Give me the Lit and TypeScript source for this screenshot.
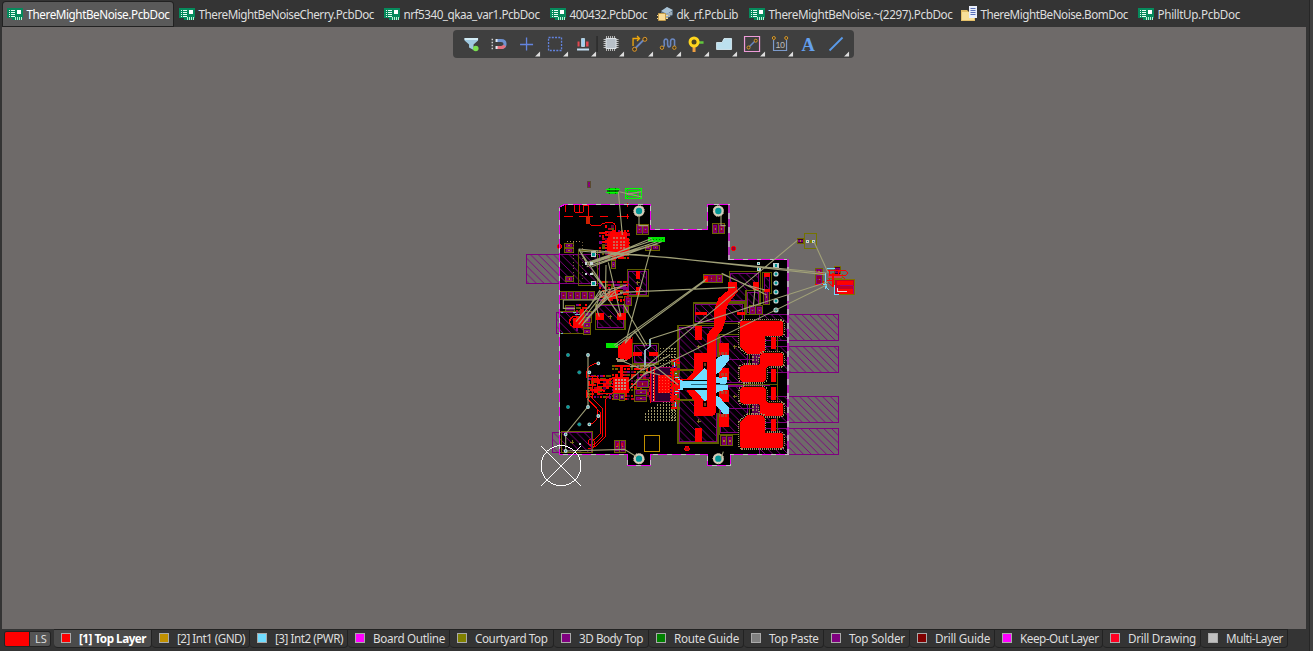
import { LitElement, html, css, svg } from "lit";
import { customElement } from "lit/decorators.js";

type Box = [number, number, number, number];
const RED = "#ff0000", PUR = "#800080", OLV = "#808000", CYN = "#70dcff", RAT = "#a0a078";

/* [kind, label, tab width, text width] */
const DOCS: [string, string, number, number][] = [
  ["pcb", "ThereMightBeNoise.PcbDoc", 172, 143],
  ["pcb", "ThereMightBeNoiseCherry.PcbDoc", 205, 175.5],
  ["pcb", "nrf5340_qkaa_var1.PcbDoc", 166, 136],
  ["pcb", "400432.PcbDoc", 107, 77.5],
  ["lib", "dk_rf.PcbLib", 92, 61.5],
  ["pcb", "ThereMightBeNoise.~(2297).PcbDoc", 212, 184],
  ["bom", "ThereMightBeNoise.BomDoc", 177, 147.5],
  ["pcb", "PhilltUp.PcbDoc", 111, 82.5],
];

/* [colour, label, tab width, text width] */
const LAYERS: [string, string, number, number][] = [
  ["#ff0000", "[1] Top Layer", 98, 67],
  ["#c09000", "[2] Int1 (GND)", 98, 68],
  ["#70dcff", "[3] Int2 (PWR)", 98, 68],
  ["#ff00ff", "Board Outline", 102, 72],
  ["#808000", "Courtyard Top", 104, 72.5],
  ["#800080", "3D Body Top", 95, 64],
  ["#008000", "Route Guide", 95, 65],
  ["#808080", "Top Paste", 80, 49.5],
  ["#800080", "Top Solder", 86, 56],
  ["#800000", "Drill Guide", 85, 55],
  ["#ff00ff", "Keep-Out Layer", 108, 78.5],
  ["#ff0022", "Drill Drawing", 98, 68],
  ["#c0c0c0", "Multi-Layer", 87, 57],
];

const docIcon = (kind: string) => {
  if (kind === "lib")
    return svg`<path d="M4 6L10 1L16 5V9L9 13L4 10Z" fill="#5b6f80"/><path d="M4 5L10 1L16 4L10 8Z" fill="#a9c3d6"/><path d="M10 8V12M12 7V11M14 6V9" stroke="#e3edf3"/><path d="M1.500 7.500H8.500V14.500H1.500Z" fill="#f9dc95" stroke="#c29a48"/><path d="M0 9.500H1M0 12.500H1M9 9.500H11M9 12.500H11" stroke="#f5d98b"/>`;
  if (kind === "bom")
    return svg`<path d="M0 4H6L8 6H14V15H0Z" fill="#e5c069"/><path d="M1 6H13V14H1Z" fill="#f9e09a"/><path d="M8 0H16V12H8Z" fill="#e8eefc"/><path d="M9.500 2.500H14.500M9.500 4.500H14.500M9.500 6.500H14.500M9.500 8.500H14.500" stroke="#5870b8"/>`;
  return svg`<path d="M0 2H16V12H14V14H5V12H0Z" fill="#068a5c"/><path d="M2 4.500H3M2 6.500H3M2 8.500H3M2 10.500H3M4 4.500H8M4 6.500H8M4 8.500H8M4 10.500H8" stroke="#e8fff4" stroke-width="1"/><path d="M10 4H14V8H10Z" fill="#fff"/><path d="M8.500 11V14M10.500 11V14M12.500 11V14M14.500 11V14" stroke="#bdf0d5"/>`;
};

const TOOLS = [
  svg`<path d="M7.500 8H21V10.500L16.500 14.500V20L12 17.500V14.500L7.500 10.500Z" fill="#9fc9e0"/><path d="M7.500 8H21V10H7.500Z" fill="#d3ecf5"/><circle cx="18.700" cy="18.500" r="2.800" fill="#7be052"/>`,
  svg`<path d="M12 10.500H16Q20 10.500 20 14Q20 17.500 16 17.500H12" fill="none" stroke="#6f92d0" stroke-width="3"/><path d="M12 17.500H16Q18.500 17.500 19.500 15.500" fill="none" stroke="#e8707c" stroke-width="3"/><path d="M10.500 10.500H12.500M10.500 17.500H12.500" stroke="#dfe8ee" stroke-width="3"/><path d="M6.500 9.500H8M6.500 12.500H8M6.500 15.500H8M6.500 18.500H8" stroke="#ccc" stroke-width="1.500"/>`,
  svg`<path d="M7 14.500H20M13.500 7.500V20.500" stroke="#6384df" stroke-width="1.300"/>`,
  svg`<path d="M7.500 7.500H20.500V20.500H7.500Z" fill="none" stroke="#6384df" stroke-width="1.300" stroke-dasharray="2 1.250"/>`,
  svg`<path d="M8.500 11.500H10.500V16.500H8.500Z M17 11.500H19.500V16.500H17Z" fill="#e2474f"/><path d="M12.500 8.500H15.500V16.500H12.500Z" fill="#9fd0f2" stroke="#d3ecfa" stroke-width=".7"/><path d="M8 19.500H20" stroke="#c3dff2" stroke-width="2"/>`,
  svg`<path d="M6.500 9.500H21.500M6.500 11.500H21.500M6.500 13.500H21.500M6.500 15.500H21.500M6.500 17.500H21.500M9.500 6V21M11.500 6V21M13.500 6V21M15.500 6V21M17.500 6V21" stroke="#ddd" stroke-width=".8"/><path d="M9 8.500H19V18.500H9Z" fill="#b8c0c8" stroke="#dce2e6"/>`,
  svg`<path d="M9 18.500L17.500 10" stroke="#6a87c0" stroke-width="1.800"/><path d="M7 16V8.500H12.500M11 6L13.500 8.500L11 11" fill="none" stroke="#f0a80c" stroke-width="1.300"/><circle cx="18.800" cy="9.300" r="2" fill="#443820" stroke="#e0982b"/><circle cx="8.500" cy="19.300" r="2" fill="#443820" stroke="#e0982b"/>`,
  svg`<path d="M9 17Q11 16 10 12Q10 9 12 9Q14 9 13.500 13Q13.500 17 15 17Q17 17 16.500 12Q16.500 9 18.500 9Q21 9 20.500 12V16" fill="none" stroke="#6a87c0" stroke-width="1.600"/><circle cx="7.900" cy="17.700" r="1.700" fill="#443820" stroke="#d8992b"/><circle cx="20.300" cy="17.700" r="1.700" fill="#443820" stroke="#d8992b"/>`,
  svg`<path d="M17 12.500H21.500" stroke="#62c83c" stroke-width="2.500"/><path d="M10.500 16H13.500V22H10.500Z" fill="#f0a040"/><circle cx="12" cy="12" r="4" fill="#4a4322" stroke="#ffd51d" stroke-width="3"/>`,
  svg`<path d="M6.500 19.500V12.500H12L14 8.500H21.500V19.500Z" fill="#bce0ee" stroke="#dff4fb" stroke-width=".8"/>`,
  svg`<path d="M6.500 6.500H21.500V21.500H6.500Z" fill="none" stroke="#ee9bd8" stroke-width="1.200"/><path d="M10 18L18 10" stroke="#6a87c0" stroke-width="1.500"/><circle cx="17.700" cy="10.700" r="1.500" fill="#443820" stroke="#d8992b"/><circle cx="10.500" cy="17.500" r="1.500" fill="#443820" stroke="#d8992b"/>`,
  svg`<path d="M7.500 10V20.500H20.500V10" fill="none" stroke="#7c9bcc" stroke-width="1.200"/><circle cx="7.800" cy="8" r="1.500" fill="#443820" stroke="#d8992b"/><circle cx="20.200" cy="8" r="1.500" fill="#443820" stroke="#d8992b"/><text x="9.500" y="17.500" class="ten">10</text>`,
  svg`<text x="7.500" y="21" class="bigA">A</text>`,
  svg`<path d="M7.500 20.500L20.500 7.500" stroke="#5a9bea" stroke-width="1.800"/>`,
];

/* Board primitives. One drawing unit is a third of a pixel. */
const fill = (c: string, list: Box[]) => list.map(([x, y, w, h]) => svg`<rect x=${x} y=${y} width=${w} height=${h} fill=${c}/>`);
const frame = (c: string, list: Box[]) => list.map(([x, y, w, h]) => svg`<rect x=${x} y=${y} width=${w} height=${h} fill="none" stroke=${c} stroke-width="3"/>`);
const body = (list: Box[]) => list.map(([x, y, w, h]) => svg`<rect x=${x} y=${y} width=${w} height=${h} fill="url(#hatch)" stroke=${PUR} stroke-width="3"/>`);
const court = (list: Box[]) => list.map(([x, y, w, h]) => svg`<rect x=${x} y=${y} width=${w} height=${h} fill="#000" stroke="#5c5c00" stroke-width="4"/><rect x=${x + 5} y=${y + 5} width=${w - 10} height=${h - 10} fill="url(#hatch)" stroke=${PUR} stroke-width="3"/>`);
const part = (list: Box[]) => list.map(([x, y, w, h]) => {
  const wide = w > h;
  const a = wide ? [w / 2 - 5, h - 8] : [w - 8, h / 2 - 5];
  return svg`<rect x=${x} y=${y} width=${w} height=${h} fill="#3c0030" stroke="#6c6400" stroke-width="3"/>
  <rect x=${x + 4} y=${y + 4} width=${a[0]} height=${a[1]} fill="#900030" stroke=${PUR} stroke-width="3"/>
  <rect x=${wide ? x + w / 2 + 1 : x + 4} y=${wide ? y + 4 : y + h / 2 + 1} width=${a[0]} height=${a[1]} fill="#900030" stroke=${PUR} stroke-width="3"/>
  <rect x=${x + w / 2 - 2} y=${y + h / 2 - 2} width="4" height="4" fill="#a08020"/>`;
});
const hole = (x: number, y: number) => svg`<circle cx=${x} cy=${y} r="13" fill="#009696" stroke="#d2cbb9" stroke-width="7" shape-rendering="auto"/><circle cx=${x} cy=${y} r="16" fill="none" stroke="#a89878" stroke-width="2" stroke-dasharray="3 4"/>`;
const pin = (x: number, y: number, r = 5) => svg`<circle cx=${x} cy=${y} r=${r} fill="#009696" stroke="#c8d8d8" stroke-width="3.500" shape-rendering="auto"/>`;
const lines = (c: string, w: number, d: string) => svg`<path d=${d} fill="none" stroke=${c} stroke-width=${w}/>`;

const cluster = (x0: number, y0: number, w: number, h: number, seed: number) => {
  const out = [];
  const cols = [RED, "#c00020", PUR, "#605800", "#e01000", "#600040", RED, "#706000"];
  let s = seed;
  for (let y = 0; y < h; y += 9)
    for (let x = 0; x < w; x += 9) {
      s = (s * 1103515245 + 12345) % 2147483648;
      const k = Math.floor(s / 65536);
      if (k % 7 === 0) continue;
      out.push(svg`<rect x=${x0 + x} y=${y0 + y} width=${k % 3 ? 9 : 6} height=${k % 5 ? 6 : 9} fill=${cols[k % 8]}/>`);
    }
  return out;
};
const dots = (x0: number, y0: number, nx: number, ny: number, step: number, c: string, size = 3, keep: (i: number, j: number) => boolean = () => true) => {
  const out = [];
  for (let j = 0; j < ny; j++) for (let i = 0; i < nx; i++)
    if (keep(i, j)) out.push(svg`<rect x=${x0 + i * step} y=${y0 + j * step} width=${size} height=${size} fill=${c}/>`);
  return out;
};

const OUTLINE = "M118 97L133 88H391V163H562V88H627V253H804V838H631V871H562V838H391V871H323V838H118Z";
const POUR1 = "M217 93H330Q340 93 340 103V129Q340 137 331 137H293Q284 137 284 146V180Q284 191 274 191H232L210 170V101Q210 93 217 93Z";
const POUR2 = "M285 189H330Q340 189 340 199V219Q340 228 331 228H299Q289 228 289 238V261Q289 276 274 276H222Q210 276 210 264V238Q210 226 222 226H261Q270 226 270 217V203Q270 189 285 189Z";

const pour = (d: string, flip: boolean) => svg`<g transform=${flip ? "translate(0 567) scale(1 -1)" : "translate(0 0)"}>
  <path d=${d} fill="#000" stroke="#a09060" stroke-width="11" stroke-dasharray="3 3"/><path d=${d} fill=${RED} stroke="#201800" stroke-width="3"/><path d=${d} fill=${RED}/></g>`;

const upperLeft = () => svg`
  ${fill("#800080", [[202, 19, 12, 19]])}${frame("#5a4a30", [[203, 20, 9, 17]])}${fill("#c00040", [[206, 26, 4, 5]])}
  ${fill("#00d800", [[264, 39, 34, 17]])}${lines("#004000", 2, "M260 46H298M260 51H296M270 39V56M286 39V56")}${lines("#00ff00", 3, "M258 44H300M258 53H294")}
  ${frame("#00ff00", [[318, 41, 46, 29]])}${lines("#00e000", 3, "M318 47H364M318 64H364M324 41V70M358 41V70M330 50H352M330 60H352")}
  ${lines(RED, 3, "M137 112V90M137 90H164V112H178V90M190 90V112M190 112H178M190 91H206M206 90V134M240 90H265M290 90H327M133 125H160M178 125H218M240 125H263M290 125H327")}
  ${lines(RED, 3, "M206 134Q206 151 218 151H240Q250 143 260 143H272Q288 143 288 160V172M322 84V95M322 118V131")}
  ${fill("#d02000", [[199, 124, 10, 22]])}
  ${hole(357, 108)}
  ${part([[350, 148, 18, 30], [368, 148, 18, 30]])}
  ${cluster(237, 172, 36, 72, 7)}${cluster(256, 150, 24, 100, 14)}${cluster(275, 165, 50, 90, 21)}
  ${fill(RED, [[270, 170, 52, 74], [262, 188, 66, 42], [280, 164, 9, 90], [300, 168, 9, 84]])}
  ${dots(279, 187, 4, 4, 10, "#d06050", 6)}
  ${part([[275, 258, 13, 22]])}
  <rect x="19" y="238" width="220" height="87" fill="url(#hatch)" stroke=${PUR} stroke-width="3"/>
  ${frame("#606000", [[176, 227, 58, 106]])}
  ${part([[135, 206, 25, 13], [135, 220, 25, 13], [137, 305, 23, 15]])}
  ${dots(160, 200, 1, 12, 10, "#806840")}${dots(186, 200, 1, 12, 10, "#706040")}${dots(142, 197, 5, 1, 9, "#b09060")}
  <circle cx="119" cy="214" r="7" fill="#900020" stroke=${RED} stroke-width="3"/>
  ${fill("#00e800", [[385, 187, 50, 15]])}${dots(390, 192, 5, 1, 9, "#007000", 4)}${part([[376, 211, 20, 15], [396, 211, 22, 15]])}
  ${fill("#c5d5d5", [[213, 229, 16, 16], [213, 318, 16, 16]])}${fill("#009696", [[217, 233, 9, 9], [217, 322, 9, 9]])}
  ${part([[120, 349, 21, 26], [141, 349, 21, 26], [162, 349, 21, 26], [183, 349, 21, 26], [204, 349, 21, 26], [315, 366, 20, 26], [310, 395, 17, 18], [137, 393, 28, 16]])}
  ${court([[322, 284, 63, 79], [227, 388, 88, 75]])}
  ${fill(RED, [[347, 287, 12, 25], [347, 335, 12, 25], [227, 414, 24, 22], [290, 414, 27, 22]])}
  ${lines("#807020", 3, "M348 323H360M354 317V329M265 425H277M271 419V431")}
  ${cluster(238, 319, 84, 58, 31)}${fill(RED, [[264, 348, 30, 24]])}
  <rect x="109" y="412" width="88" height="63" fill="url(#hatch)" stroke=${PUR} stroke-width="3"/>${frame("#686000", [[120, 411, 78, 66]])}
  ${cluster(168, 388, 30, 80, 41)}${fill(RED, [[160, 430, 38, 30], [180, 402, 13, 30]])}
  <circle cx="165" cy="440" r="16" fill="none" stroke=${RED} stroke-width="4"/>
  ${part([[193, 411, 21, 16], [193, 427, 21, 16], [190, 443, 23, 16], [190, 462, 23, 16]])}
  ${lines("#70b8c0", 3, "M122 414H130M158 414H168M122 475H130M165 418H180")}`;

const upperRight = () => svg`
  ${hole(175, 48)}${part([[157, 87, 18, 30], [176, 87, 18, 30]])}
  <circle cx="221" cy="160" r="7" fill="#a00030" stroke=${RED} stroke-width="3"/>
  ${court([[208, 230, 93, 91], [101, 324, 152, 61], [308, 233, 26, 62]])}
  ${part([[130, 239, 50, 24], [170, 238, 18, 26], [312, 283, 16, 46], [268, 333, 20, 27], [289, 333, 20, 27]])}
  ${fill(RED, [[280, 260, 17, 32], [210, 262, 22, 24], [131, 242, 12, 18], [104, 351, 38, 10], [230, 351, 26, 10], [313, 235, 18, 10], [313, 282, 16, 10]])}
  ${fill("#c0d0d0", [[340, 203, 16, 16], [292, 201, 9, 9], [291, 217, 11, 10]])}${fill("#009696", [[344, 207, 8, 8], [295, 204, 3, 3], [294, 220, 4, 4]])}
  ${[237, 264, 291, 318, 345].map((y) => pin(348, y, 6))}
  ${frame("#747400", [[433, 116, 38, 44]])}${part([[412, 132, 20, 13]])}${fill("#d0d0c0", [[439, 135, 9, 9], [456, 135, 9, 9]])}${fill("#009696", [[442, 138, 3, 3], [459, 138, 3, 3]])}${fill(OLV, [[449, 136, 6, 7]])}
  ${part([[467, 221, 21, 17], [467, 239, 22, 30], [523, 216, 20, 22]])}
  ${lines(RED, 3, "M466 236H490M466 268H490V258M500 228H556M500 256H520M508 228V256M505 262L520 275M545 241L556 252")}
  ${fill("#c04060", [[504, 236, 40, 14]])}${lines("#807000", 3, "M504 250H545M522 216H544M548 238V250")}
  <rect x="535" y="227" width="27" height="14" rx="7" fill="none" stroke=${RED} stroke-width="3"/>
  ${fill("#c00028", [[523, 254, 60, 45]])}${frame("#807000", [[523, 254, 60, 45]])}${fill(RED, [[530, 258, 50, 12], [533, 282, 47, 15], [506, 238, 34, 5], [515, 235, 6, 40]])}
  ${lines("#a00080", 3, "M540 273H580V297")}${lines(CYN, 3, "M502 222H526M490 268H500Q498 278 506 286M523 270V300H538M497 235V283")}${lines("#ddd", 3, "M535 289H560M532 280V292")}`;

const lowerLeft = () => svg`
  ${[[144, 75], [178, 127], [144, 231], [178, 283]].map(([x, y]) => svg`<circle cx=${x} cy=${y} r="5" fill="#00a0a0" stroke="#508888" stroke-width="2" shape-rendering="auto"/>`)}
  ${lines(RED, 3, "M235 100Q205 100 200 127V145M205 180Q198 205 215 218Q240 235 232 262Q225 282 208 283M257 320L217 357H205M275 190L257 208V320M200 180V205L241 246V310L208 346M208 195L249 238V318L216 353")}
  <ellipse cx="214" cy="337" rx="10" ry="9" fill="none" stroke=${RED} stroke-width="3"/>
  ${fill("#00e800", [[258, 40, 37, 15]])}<path d="M294 50L333 17L335 30V82L322 90L294 84Z" fill=${RED}/>
  ${lines(RED, 2, "M338 20V85")}<path d="M286 84L322 90L314 96H292Z" fill="#a09070"/>
  ${court([[338, 41, 77, 61]])}${fill(RED, [[338, 66, 27, 11], [387, 66, 26, 11]])}
  ${dots(420, 54, 6, 7, 9, "#a09860", 4)}
  ${dots(375, 214, 11, 7, 9, "#a09868", 4, (i, j) => i + j * 1.6 > 5)}
  ${cluster(205, 136, 68, 65, 61)}${lines(RED, 4, "M207 140H232V195M218 138V200M232 150H272M232 160H280M232 170H280M210 180H250M240 190H290")}
  ${cluster(276, 104, 50, 100, 71)}${fill(RED, [[278, 142, 48, 46], [300, 104, 9, 40]])}${dots(286, 148, 4, 4, 9, "#c09080", 6)}
  ${part([[280, 190, 18, 19], [298, 192, 17, 19]])}
  ${cluster(332, 105, 60, 105, 81)}${part([[350, 150, 36, 24], [345, 178, 36, 18], [345, 198, 36, 16]])}
  ${fill("#300030", [[396, 112, 62, 102]])}${frame("#a00060", [[396, 112, 62, 102]])}
  ${dots(398, 118, 1, 11, 9, "#d8b080", 5)}${dots(450, 118, 1, 11, 9, RED, 6)}${lines(RED, 5, "M392 112V220M404 112V214M460 88V236M470 88V236")}
  ${fill(RED, [[413, 135, 37, 55]])}${dots(417, 140, 4, 6, 9, "#ff5030", 4)}
  ${cluster(455, 90, 24, 145, 91)}${lines(CYN, 4, "M466 116H478M466 130H478M466 150V170M466 195H478M466 208H478")}
  ${lines("#90b8c0", 4, "M390 28V50L375 62V112")}
  <rect x="98" y="307" width="117" height="60" fill="url(#hatch)" stroke=${PUR} stroke-width="3"/>${frame("#6c6400", [[125, 305, 92, 64]])}${lines("#807020", 3, "M151 337H163M157 331V343")}
  ${part([[283, 332, 17, 35], [300, 332, 17, 35]])}${fill("#d00030", [[290, 340, 7, 7], [303, 340, 7, 7]])}${frame("#c09000", [[374, 317, 44, 47]])}${hole(357, 386)}`;

const lowerRight = () => svg`
  ${court([[24, 107, 120, 352], [148, 134, 90, 150], [148, 284, 90, 150], [228, 2, 42, 72]])}
  ${fill("#000", [[72, 200, 76, 170]])}
  ${body([[270, 73, 236, 78], [270, 169, 236, 78], [270, 320, 236, 78], [270, 415, 236, 78]])}
  ${lines("#606000", 4, "M145 283H323M323 140V430M24 235V240H72M24 330H72")}${lines(PUR, 3, "M145 208H250M145 357H250M150 287H300")}
  ${lines("#807020", 3, "M80 171H92M86 165V177M80 394H92M86 388V400M190 171H200M195 166V176M190 320H200M195 315V325")}
  ${dots(3, 175, 2, 5, 8, "#a09868", 4)}${dots(3, 350, 2, 6, 8, "#a09868", 4)}
  ${fill("#600050", [[245, 185, 22, 40], [245, 335, 22, 45]])}${dots(247, 188, 2, 4, 10, "#a08050", 5)}${dots(247, 338, 2, 4, 10, "#a08050", 5)}
  <path d="M175 -23H201L203 5L175 40L168 60V85L155 123L137 143V367Q134 378 124 378H72V333L48 299H16V268H48L72 243V190H111V133L131 110L132 60L145 25L175 0Z" fill=${RED}/>
  ${fill("#100000", [[100, 216, 11, 20], [100, 332, 11, 20]])}${fill("#704020", [[103, 219, 6, 10], [103, 338, 6, 10]])}
  ${fill(RED, [[75, 108, 21, 43], [75, 414, 21, 43], [147, 159, 30, 36], [147, 233, 30, 36], [147, 300, 30, 36], [147, 372, 30, 39], [303, 142, 15, 36], [303, 238, 15, 37], [303, 292, 15, 37], [303, 388, 15, 36]])}
  <path d="M64 273L104 234L111 240V328L104 334L75 300H30V273ZM138 207L158 195H177V211L149 246L138 252ZM138 316L150 323L177 354V371H160L138 345ZM138 260L150 264L172 259V277L165 284H138ZM138 285H174V299L150 303L138 310Z" fill=${CYN}/>
  ${lines("#000", 4, "M40 272H111M40 297H111M138 281H150")}${lines(CYN, 10, "M30 278H111M30 290H111")}${lines("#003040", 2, "M64 284H111M138 284H174")}
  <path d="M112 170H137V370H112Z" fill=${RED}/>
  ${lines("#906040", 2, "M150 187V195M154 187V195M158 187V195M162 187V195M166 187V195M170 187V195M150 248V259M154 248V259M158 248V259M162 248V259M166 248V259M170 248V259M150 304V312M154 304V312M158 304V312M162 304V312M166 304V312M170 304V312M150 372V382M154 372V382M158 372V382M162 372V382M166 372V382M170 372V382")}
  ${pour(POUR1, false)}${pour(POUR2, false)}${pour(POUR2, true)}${pour(POUR1, true)}
  ${cluster(4, 208, 20, 148, 99)}${lines(RED, 7, "M10 240V330M20 258V312")}${lines(CYN, 3, "M15 215V232M18 335V352M24 268L40 275M24 300L40 293M14 262H26M14 306H26")}
  ${part([[153, 438, 18, 30], [171, 438, 18, 30], [238, 48, 20, 26], [258, 48, 20, 26]])}
  <circle cx="51" cy="476" r="7" fill="#c00010" stroke=${RED} stroke-width="3"/>${hole(145, 506)}`;

const RATS = "M295 50L307 180M298 50L365 66M320 58L364 50M176 222L920 294M176 228L450 248L915 299M200 263L400 196M200 270L410 200M215 275L425 200M200 275L385 215M220 262L395 190M198 265L415 206M176 222L262 350M176 222L200 265M392 222L335 435L316 505M300 352L645 337M560 311L282 511M556 317L286 516M390 492L925 320M323 620L832 196M370 600L920 330M882 200L925 295M605 295L740 360M608 298L680 330L735 345M705 340L700 395M265 262L303 424M258 270L256 372M245 350L168 440M252 352L176 448M260 358L185 452M270 356L196 440M240 345L205 400M245 350L228 395L238 425M250 350L300 425M310 388L380 510M320 330L236 352M130 375H225L310 332M130 375V400H165M275 340L190 445M285 350L200 430M215 290L262 350M320 350L250 372M357 122V152H384M603 120V152H617M315 505L345 470L375 515M204 540V695L137 777V828L313 823L350 845M300 555L370 585L450 540M330 640L380 590L420 600M610 830L603 850M475 630L400 570L330 575";

@customElement("app-root")
export class AppRoot extends LitElement {
  static styles = css`
    :host { display: flex; flex-direction: column; width: 1313px; height: 651px; background: linear-gradient(90deg, #343434 1309px, #262626 1309px 1310px, #404040 1310px); overflow: hidden; color: #dedede; font: 11.7px/16px "Noto Sans", "Open Sans", sans-serif; }
    * { box-sizing: border-box; }
    .docs { display: flex; height: 27px; padding: 2px 0 0 3px; flex: none; }
    .doc { display: flex; align-items: center; flex: none; height: 24px; padding-left: 4px; gap: 3.500px; white-space: nowrap; }
    .doc.on { background: #5a5a5a; border-radius: 3px 3px 0 0; box-shadow: 0 0 0 1px #222; margin-right: 2px; color: #fff; }
    .docIcon { width: 16px; height: 16px; flex: none; }
    .label { padding-bottom: 1px; }
    .layer .label { padding-bottom: 2px; }
    .work { flex: 1; margin: 0 7px 0 2px; background: #6e6a69; display: grid; justify-items: start; overflow: hidden; }
    .tools, .board { grid-area: 1 / 1; }
    .board { width: 1304px; height: 602px; display: block; }
    .tools { z-index: 1; margin: 3px 0 0 451px; width: 401px; height: 28px; padding-left: 4px; display: flex; background: #3f3f3f; border-radius: 4px; }
    .tool { width: 28.1px; height: 28px; flex: none; overflow: visible; }
    .ten { font: 9px "Liberation Sans", sans-serif; letter-spacing: -.5px; fill: #bbb; }
    .bigA { font: bold 18.5px "Liberation Serif", serif; fill: #64a0ee; }
    .layers { height: 22px; flex: none; display: flex; padding-left: 5px; }
    .set { display: flex; width: 45px; height: 14px; margin: 3px 4px 0 0; border-radius: 2px; background: #555; overflow: hidden; box-shadow: 0 0 0 1px #222; line-height: 14px; font-size: 11px; }
    .setColour { width: 25px; background: red; margin-right: 5px; border-right: 1px solid #222; }
    .layer { display: flex; align-items: center; flex: none; height: 19px; padding-left: 7px; gap: 8px; border: solid #222; border-width: 1px 1px 1px 0; border-radius: 0 0 4px 4px; white-space: nowrap; }
    .layer.on { background: #4b4b4b; font-weight: bold; color: #fff; }
    .swatch { width: 10px; height: 10px; flex: none; border: 1px solid #aaa; margin-top: -1px; }
  `;

  /* Tracks each tab label so that it fills its allotted text width. */
  firstUpdated() {
    this.renderRoot.querySelectorAll<HTMLElement>("[data-fit]").forEach((el) => {
      const n = (el.textContent ?? "").length;
      const gap = Number(el.dataset.fit) - el.getBoundingClientRect().width;
      el.style.letterSpacing = `${gap / n}px`;
    });
  }

  render() {
    return html`
      <div class="docs">
        ${DOCS.map(([kind, label, w, fit], i) => html`<div class="doc ${i ? "" : "on"}" style="width:${i ? w : w - 2}px">
          <svg class="docIcon" viewBox="0 0 16 16">${docIcon(kind)}</svg><span class="label" data-fit=${fit}>${label}</span></div>`)}
      </div>
      <div class="work">
        <div class="tools">
          ${TOOLS.map((t, i) => html`<svg class="tool" viewBox="0 0 28 28">${t}${i > 1 && i !== 12 ? svg`<path d="M27 21.500V26.500H22Z" fill="#ddd"/>` : ""}${i === 4 ? svg`<path d="M28 6V22" stroke="#222"/>` : ""}</svg>`)}
        </div>
        <svg class="board" viewBox="2 27 1304 602" shape-rendering="crispEdges">
          <defs><pattern id="hatch" width="23" height="23" patternUnits="userSpaceOnUse"><path d="M-5 -5L28 28M-5 18L5 28M18 -5L28 5" stroke=${PUR} stroke-width="2.500"/></pattern></defs>
          <g transform="translate(520 175) scale(.33333)">
            <path d=${OUTLINE} fill="#000"/>
            ${upperLeft()}
            <g transform="translate(0 465)">${lowerLeft()}</g>
            <g transform="translate(420 60)">${upperRight()}</g>
            <g transform="translate(450 345)">${lowerRight()}</g>
            <path d=${OUTLINE} fill="none" stroke="#c8b8c8" stroke-width="3.500"/>
            <path d=${OUTLINE} fill="none" stroke="#f000f0" stroke-width="3.500" stroke-dasharray="27 15"/>
            <path d="M627 90V253M804 253V838" stroke="#b8a0b8" stroke-width="5"/>
            <path d="M627 90V253M804 253V838" stroke="#b428b4" stroke-width="5" stroke-dasharray="24 18"/>
            <path d=${RATS} fill="none" stroke=${RAT} stroke-width="3.300" shape-rendering="auto"/>
            ${[[204, 540], [208, 592], [235, 565], [204, 696], [235, 723], [208, 748], [137, 778], [137, 828]].map(([x, y]) => pin(x, y, 4))}
            ${fill("#c5d5d5", [[194, 262, 7, 7], [211, 262, 7, 7], [194, 294, 7, 7], [211, 294, 7, 7], [176, 804, 6, 6]])}
            <g fill="none" stroke="#fff" stroke-width="3"><circle cx="123" cy="872" r="60"/><path d="M63 812L183 932M183 812L63 932"/></g>
          </g>
        </svg>
      </div>
      <div class="layers">
        <div class="set"><div class="setColour"></div>LS</div>
        ${LAYERS.map(([c, label, w, fit], i) => html`<div class="layer ${i ? "" : "on"}" style="width:${w}px">
          <div class="swatch" style="background:${c}"></div><span class="label" data-fit=${fit}>${label}</span></div>`)}
      </div>`;
  }
}
